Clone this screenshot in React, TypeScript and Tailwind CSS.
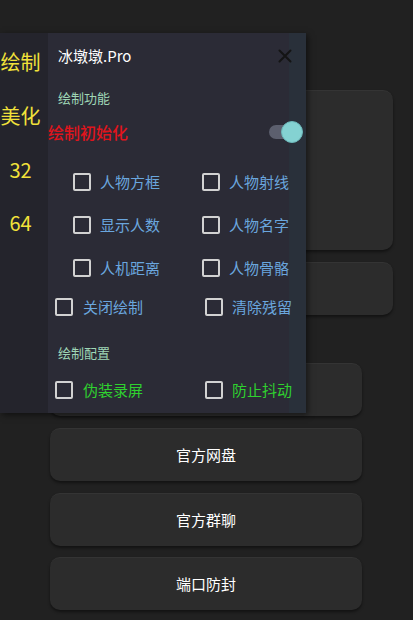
import React from "react";

const font = { fontFamily: '"Noto Sans CJK SC", "Noto Sans", sans-serif' };

function Box() {
  return <div className="w-[18px] h-[18px] border-2 border-[#d2d2d2] rounded-[2px] shrink-0" />;
}

function Check({ label, color, gap }: { label: string; color: string; gap: string }) {
  return (
    <div className={`flex items-center ${gap}`}>
      <Box />
      <span className="text-[15px] leading-[20px]" style={{ color }}>{label}</span>
    </div>
  );
}

function Card({ h, w, mt, text }: { h: string; w: string; mt: string; text?: string }) {
  return (
    <div
      className={`${h} ${w} ${mt} bg-[#2c2c2c] rounded-[10px] shadow-[0_2px_3px_rgba(0,0,0,0.45)] border-t border-[#343434] flex items-center justify-center text-white text-[15px]`}
    >
      {text}
    </div>
  );
}

export default function App() {
  const blue = "#6aa6de";
  const green = "#2fd12f";
  return (
    <div className="relative w-[413px] h-[620px] bg-[#212121] overflow-hidden" style={font}>
      <div className="flex flex-col pl-[50px]">
        <Card h="h-[160px]" w="w-[343px]" mt="mt-[90px]" />
        <Card h="h-[53px]" w="w-[343px]" mt="mt-[12px]" />
        <Card h="h-[53px]" w="w-[312px]" mt="mt-[48px]" />
        <Card h="h-[53px]" w="w-[312px]" mt="mt-[12px]" text="官方网盘" />
        <Card h="h-[53px]" w="w-[312px]" mt="mt-[12px]" text="官方群聊" />
        <Card h="h-[53px]" w="w-[312px]" mt="mt-[11px]" text="端口防封" />
      </div>

      <div className="absolute left-0 top-[33px] h-[380px] flex shadow-[2px_2px_6px_rgba(0,0,0,0.5)]">
        <div className="w-[48px] h-full bg-[#24242c] flex flex-col items-center pr-[7px] text-[#f2e23a] text-[20px] leading-[26px]">
          <div className="mt-[16px] whitespace-nowrap">绘制</div>
          <div className="mt-[28px] whitespace-nowrap">美化</div>
          <div className="mt-[28px]">32</div>
          <div className="mt-[27px]">64</div>
        </div>
        <div className="relative w-[258px] h-full bg-[#2b2b36]">
          <div className="absolute right-0 top-0 bottom-0 w-[17px] bg-[#29303a]" />
          <div className="relative flex flex-col">
            <div className="flex items-center justify-between mt-[13px] pl-[10px] pr-[14px] h-[20px]">
              <span className="text-white text-[15px] leading-[20px]">冰墩墩.Pro</span>
              <svg width="14" height="14" viewBox="0 0 14 14">
                <path d="M1.5 1.5 L12.5 12.5 M12.5 1.5 L1.5 12.5" stroke="#141414" strokeWidth="2" strokeLinecap="round" />
              </svg>
            </div>
            <div className="mt-[23px] pl-[10px] text-[13px] leading-[18px] text-[#9fd7b6]">绘制功能</div>
            <div className="mt-[13px] h-[24px] flex items-center justify-between pr-[3px]">
              <span className="text-[16px] leading-[22px] font-medium text-[#e0141c]">绘制初始化</span>
              <div className="relative w-[34px] h-[22px] flex items-center">
                <div className="w-[30px] h-[14px] rounded-full bg-[#5c5f6e]" />
                <div className="absolute right-0 top-0 w-[22px] h-[22px] rounded-full bg-[#84d2d2] border border-[#6cb8ba]" />
              </div>
            </div>
            <div className="mt-[28px] flex pl-[25px] h-[20px]">
              <div className="w-[129px]"><Check label="人物方框" color={blue} gap="gap-[9px]" /></div>
              <Check label="人物射线" color={blue} gap="gap-[9px]" />
            </div>
            <div className="mt-[23px] flex pl-[25px] h-[20px]">
              <div className="w-[129px]"><Check label="显示人数" color={blue} gap="gap-[9px]" /></div>
              <Check label="人物名字" color={blue} gap="gap-[9px]" />
            </div>
            <div className="mt-[23px] flex pl-[25px] h-[20px]">
              <div className="w-[129px]"><Check label="人机距离" color={blue} gap="gap-[9px]" /></div>
              <Check label="人物骨骼" color={blue} gap="gap-[9px]" />
            </div>
            <div className="mt-[19px] flex pl-[7px] h-[20px]">
              <div className="w-[150px]"><Check label="关闭绘制" color={blue} gap="gap-[10px]" /></div>
              <Check label="清除残留" color={blue} gap="gap-[9px]" />
            </div>
            <div className="mt-[27px] pl-[10px] text-[13px] leading-[18px] text-[#9fd7b6]">绘制配置</div>
            <div className="mt-[18px] flex pl-[7px] h-[20px]">
              <div className="w-[150px]"><Check label="伪装录屏" color={green} gap="gap-[10px]" /></div>
              <Check label="防止抖动" color={green} gap="gap-[9px]" />
            </div>
          </div>
        </div>
      </div>
    </div>
  );
}
